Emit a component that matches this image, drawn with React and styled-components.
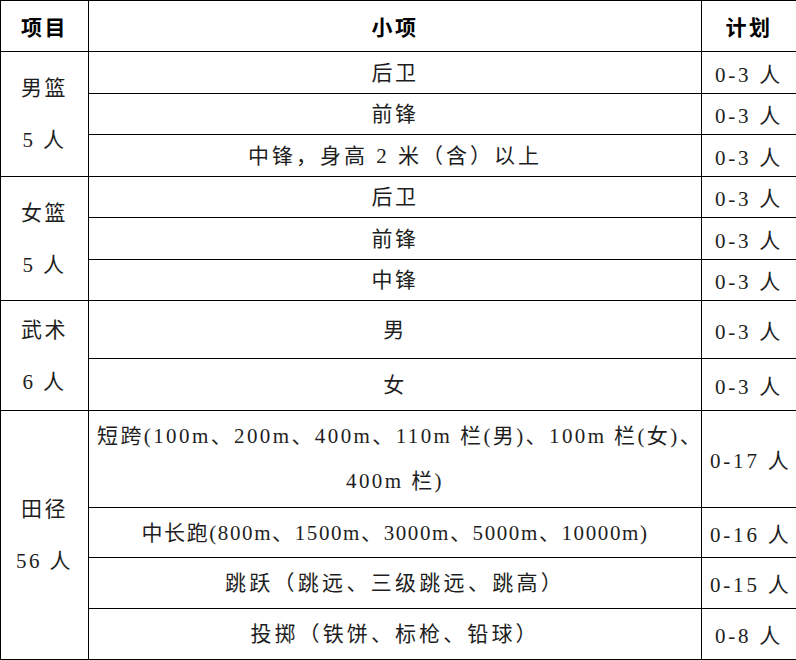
import React from 'react';
import styled, { createGlobalStyle } from 'styled-components';

const GlobalStyle = createGlobalStyle`
  html, body {
    margin: 0;
    padding: 0;
    background: #fff;
  }
`;

const Table = styled.table`
  width: 796px;
  height: 660px;
  table-layout: fixed;
  border-collapse: collapse;
  font-family: 'Liberation Serif', 'Noto Sans CJK SC', serif;
  font-size: 21px;
  color: #1e1e1e;

  td,
  th {
    border: 1px solid #000;
    padding: 0 8px;
    text-align: center;
    vertical-align: middle;
    letter-spacing: 2.4px;
    white-space: nowrap;
  }
`;

const Row = styled.tr`
  height: ${({ $h }) => $h}px;
`;

const Head = styled.th`
  font-weight: 700;
  color: #000;
  letter-spacing: 1px;
`;

const GroupCell = styled.td`
  line-height: 52px;
`;

const ItemCell = styled.td`
  line-height: ${({ $lh }) => $lh}px;
  && {
    letter-spacing: ${({ $ls }) => $ls}px;
  }
`;

const PlanCell = styled.td`
  && {
    letter-spacing: 2.8px;
  }
`;

const groups = [
  {
    name: '男篮',
    total: '5 人',
    rows: [
      { item: '后卫', plan: '0-3 人', h: 42 },
      { item: '前锋', plan: '0-3 人', h: 41 },
      { item: '中锋，身高 2 米（含）以上', plan: '0-3 人', h: 42, ls: 3 },
    ],
  },
  {
    name: '女篮',
    total: '5 人',
    rows: [
      { item: '后卫', plan: '0-3 人', h: 41 },
      { item: '前锋', plan: '0-3 人', h: 42 },
      { item: '中锋', plan: '0-3 人', h: 41 },
    ],
  },
  {
    name: '武术',
    total: '6 人',
    rows: [
      { item: '男', plan: '0-3 人', h: 58 },
      { item: '女', plan: '0-3 人', h: 52 },
    ],
  },
  {
    name: '田径',
    total: '56 人',
    rows: [
      {
        item: ['短跨(100m、200m、400m、110m 栏(男)、100m 栏(女)、', '400m 栏)'],
        plan: '0-17 人',
        h: 97,
      },
      { item: '中长跑(800m、1500m、3000m、5000m、10000m)', plan: '0-16 人', h: 50, ls: 1.6 },
      { item: '跳跃（跳远、三级跳远、跳高）', plan: '0-15 人', h: 51, ls: 3.3 },
      { item: '投掷（铁饼、标枪、铅球）', plan: '0-8 人', h: 51, ls: 3.1 },
    ],
  },
];

const App = () => {
  return (
    <>
      <GlobalStyle />
      <Table>
        <colgroup>
          <col style={{ width: 88 }} />
          <col style={{ width: 613 }} />
          <col style={{ width: 95 }} />
        </colgroup>
        <tbody>
          <Row $h={51}>
            <Head>项目</Head>
            <Head>小项</Head>
            <Head>计划</Head>
          </Row>
          {groups.map((g) =>
            g.rows.map((r, i) => (
              <Row $h={r.h} key={`${g.name}${i}`}>
                {i === 0 && (
                  <GroupCell rowSpan={g.rows.length}>
                    {g.name}
                    <br />
                    {g.total}
                  </GroupCell>
                )}
                <ItemCell
                  $lh={Array.isArray(r.item) ? 45 : 30}
                  $ls={r.ls || 2.4}>
                  {Array.isArray(r.item) ? (
                    <>
                      {r.item[0]}
                      <br />
                      {r.item[1]}
                    </>
                  ) : (
                    r.item
                  )}
                </ItemCell>
                <PlanCell>{r.plan}</PlanCell>
              </Row>
            ))
          )}
        </tbody>
      </Table>
    </>
  );
};

export default App;
